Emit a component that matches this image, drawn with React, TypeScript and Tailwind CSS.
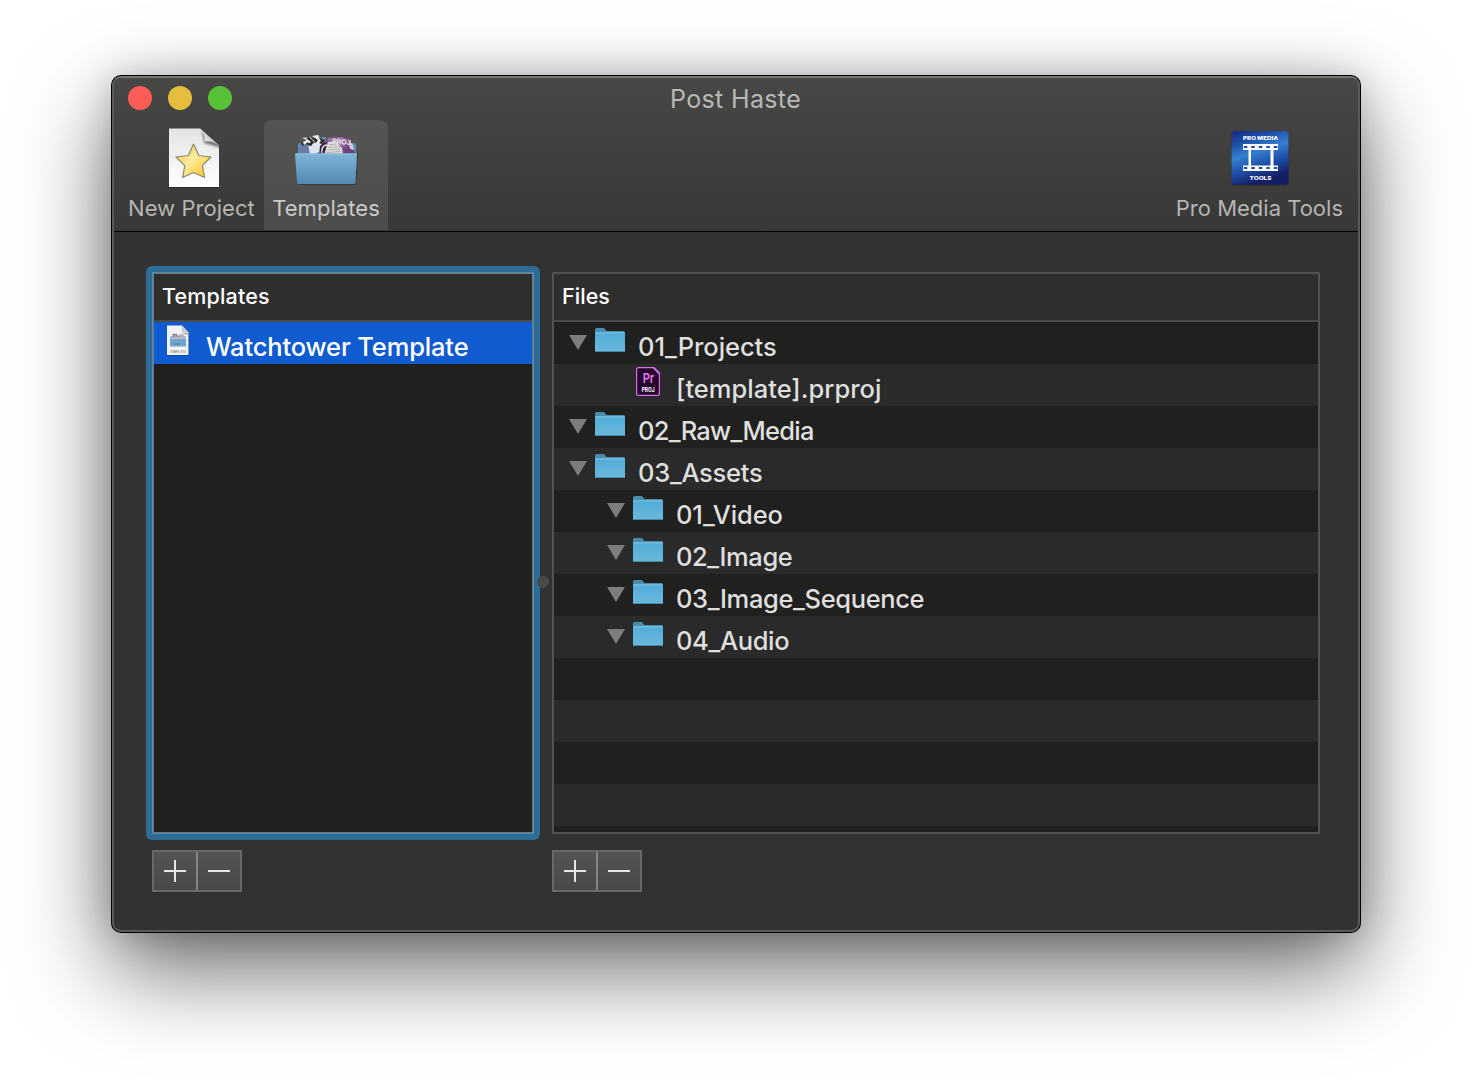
import React from "react";

function DocumentStarIcon() {
  return (
    <svg width="54" height="62" viewBox="0 0 54 62">
      <defs>
        <linearGradient id="paper" x1="0" y1="0" x2="0" y2="1">
          <stop offset="0" stopColor="#e4e4e4" />
          <stop offset="1" stopColor="#ffffff" />
        </linearGradient>
        <linearGradient id="gold" x1="0" y1="0" x2="1" y2="1">
          <stop offset="0" stopColor="#fbc926" />
          <stop offset="0.45" stopColor="#fbeaa0" />
          <stop offset="1" stopColor="#fbc40f" />
        </linearGradient>
        <linearGradient id="fold" x1="0" y1="1" x2="1" y2="0">
          <stop offset="0" stopColor="#ffffff" />
          <stop offset="0.5" stopColor="#cfcfcf" />
        </linearGradient>
        <filter id="soft" x="-40%" y="-40%" width="180%" height="180%">
          <feGaussianBlur stdDeviation="1.3" />
        </filter>
        <clipPath id="sheet"><path d="M2 1.500H33L52 18.500V60H2Z" /></clipPath>
      </defs>
      <path d="M2 2H33L52 19V61H2Z" fill="#202020" opacity="0.5" />
      <path d="M2 1.500H33L52 18.500V60H2Z" fill="url(#paper)" />
      <g clipPath="url(#sheet)">
        <path d="M35 4L37 16L54 21V17Z" fill="#555" opacity="0.75" filter="url(#soft)" />
      </g>
      <path d="M33 1.500C36.500 5 38 9 37.500 14.500C43 13.500 48 15 52 18.500Z" fill="url(#fold)" />
      <path d="M26.500 17L31.800 28.500L44 30L35.400 38.600L37.600 50.500L26.500 45.500L15.600 50.500L17.800 38.600L9 30L21.300 28.500Z" fill="url(#gold)" stroke="#8a8678" strokeWidth="1.200" strokeLinejoin="round" />
    </svg>
  );
}

function TemplatesIcon() {
  return (
    <svg width="66" height="54" viewBox="0 0 66 54">
      <defs>
        <linearGradient id="boxFront" x1="0" y1="0" x2="0" y2="1">
          <stop offset="0" stopColor="#7db4d7" />
          <stop offset="1" stopColor="#5488b0" />
        </linearGradient>
        <filter id="boxShade" x="-10%" y="-10%" width="120%" height="130%">
          <feDropShadow dx="0.8" dy="0.6" stdDeviation="0.6" floodColor="#1b2530" floodOpacity="0.9" />
        </filter>
      </defs>
      <path d="M4 23V12Q4 10 6 10H12L14 8L28 4H32V10H60Q62 10 62 12V23Z" fill="#5791b7" />
      <path d="M7 10L26 3L31 8L33 22H12Z" fill="#30323c" />
      <path d="M12 12L29 8L30 22H14Z" fill="#dfe4ed" />
      <path d="M5 14L14 11L16 22H7Z" fill="#697ba9" />
      <path d="M8 5L16 4L21 9L16 12L14 9L10 12L9 9L13 7Z" fill="#f1f1ef" />
      <path d="M18 3L24 2L29 7L25 11L22 10L24 7Z" fill="#f1f1ef" />
      <path d="M15 4L20 9L17 13L13 12L17 9L12 5ZM24 3L30 8L28 11L25 10L27 8Z" fill="#252525" />
      <path d="M28 9L42 4L55 5L62 22H28Z" fill="#7e518b" />
      <path d="M33 5L49 4L51 13L36 13Z" fill="#9971a4" />
      <text x="38" y="10.500" className="font-[Inter] text-[7px] font-bold" fill="#f0e8f2" transform="rotate(5 38 10)">PROJ</text>
      <path d="M26 13L30 9L34 11L33 22H25Z" fill="#382342" />
      <path d="M28 21C27 16 29 12 33 12" stroke="#e9ddeb" strokeWidth="1.500" fill="none" />
      <path d="M34 9L42 8.500L48 15L49 22H30Z" fill="#dedddb" />
      <path d="M35 12L42 11M34 14.500L46 13.500M33 17L47 16M32 19.500L47 18.500" stroke="#aaa9a8" strokeWidth="0.900" />
      <path d="M21 21Q24 18 29 21V23H21Z" fill="#26499b" />
      <path d="M51 16L59 12L61 22H48Z" fill="#6b437a" />
      <path d="M54 6L59 12L60 17L56 16Z" fill="#d5c8da" />
      <path d="M1 20.500H63L61.500 49.500Q61.500 51 60 51H5Q3 51 3 49.500Z" fill="url(#boxFront)" filter="url(#boxShade)" />
      <path d="M1.500 21H62.500" stroke="#93c3df" strokeWidth="1" />
    </svg>
  );
}

function MediaToolsIcon() {
  const holes = [0, 1, 2, 3, 4];
  return (
    <svg width="58" height="56" viewBox="0 0 58 56">
      <defs>
        <linearGradient id="brand" x1="0" y1="0" x2="0.35" y2="1">
          <stop offset="0" stopColor="#16297d" />
          <stop offset="0.25" stopColor="#1f50a8" />
          <stop offset="0.48" stopColor="#357fd2" />
          <stop offset="0.75" stopColor="#1d4ca5" />
          <stop offset="1" stopColor="#151d63" />
        </linearGradient>
      </defs>
      <rect x="0.500" y="2" width="57" height="53.500" rx="3.500" fill="#222b39" />
      <rect x="0.500" y="1" width="57" height="53.500" rx="3.500" fill="url(#brand)" />
      <text x="29.500" y="10" textAnchor="middle" textLength="35" lengthAdjust="spacingAndGlyphs" className="font-[Inter] text-[5.2px] font-extrabold" fill="#fff">PRO MEDIA</text>
      <path d="M12 14H47V20H42.500V35.500H47V41H12V35.500H17.500V20H12ZM20 20V35.500H39.500V20Z" fill="#fff" fillRule="evenodd" />
      {holes.map((i) => (
        <g key={i} fill="#1d4ba0">
          <rect x={12.800 + i * 7.500} y="16" width="3.500" height="2" />
          <rect x={12.800 + i * 7.500} y="37" width="3.500" height="2" />
        </g>
      ))}
      <text x="29.500" y="50" textAnchor="middle" textLength="22" lengthAdjust="spacingAndGlyphs" className="font-[Inter] text-[5.200px] font-extrabold" fill="#fff">TOOLS</text>
    </svg>
  );
}

function TemplateFileIcon() {
  return (
    <svg width="24" height="31" viewBox="0 0 24 31" className="block">
      <path d="M1 1H16L23 8V30.500H1Z" fill="#153878" />
      <path d="M1 0.500H16L22.500 7.500V30H1Z" fill="#f2f2f2" />
      <path d="M16 0.500V7.500H22.500Z" fill="#c9c9c9" />
      <path d="M15.500 8H22.500V10Z" fill="#9ca3aa" />
      <path d="M4 13L5 11H19L20 13Z" fill="#74a3c4" />
      <path d="M6 12L7 9L11 9L12 11L14 9L18 10L19 13H5Z" fill="#b8adba" />
      <path d="M6 10L9 9L8 12M10 9L12 12" stroke="#777b86" fill="none" />
      <rect x="4" y="13.500" width="16" height="8" fill="#72a5cb" />
      <path d="M8 19H14" stroke="#4a7da7" />
      <text x="12" y="27.500" textAnchor="middle" textLength="16" lengthAdjust="spacingAndGlyphs" className="font-[Inter] text-[3px] font-medium" fill="#777">TEMPLATE</text>
    </svg>
  );
}

function FolderIcon() {
  return (
    <svg width="30" height="25" viewBox="0 0 30 25" className="block">
      <defs>
        <linearGradient id="folderFace" x1="0" y1="0" x2="0" y2="1">
          <stop offset="0" stopColor="#51acd8" />
          <stop offset="1" stopColor="#6bb8da" />
        </linearGradient>
      </defs>
      <path d="M0 22V1.500Q0 0 1.500 0H8.500Q9.500 0 10.300 1.500Q11 3 12.500 3H28.500Q30 3 30 4.500V22Z" fill="#4b8bac" />
      <rect y="4.200" width="30" height="19.800" rx="1" fill="url(#folderFace)" />
      <path d="M0.500 4.900H29.500" stroke="#86c9e6" strokeWidth="0.900" />
      <path d="M0.500 23.500H29.500" stroke="#438bac" strokeWidth="1" />
    </svg>
  );
}

function PremiereIcon() {
  return (
    <svg width="24" height="29" viewBox="0 0 24 29" className="block">
      <path d="M2.500 0.600H17.500L23.400 6.500V26.500Q23.400 28.400 21.500 28.400H2.500Q0.600 28.400 0.600 26.500V2.500Q0.600 0.600 2.500 0.600Z" fill="#27062d" stroke="#d86ee9" strokeWidth="1.200" />
      <path d="M17.500 0.600L23.400 6.500" stroke="#d86ee9" strokeWidth="1.800" />
      <text x="12.500" y="15.500" textAnchor="middle" textLength="11.500" lengthAdjust="spacingAndGlyphs" className="font-[Inter] text-[13px] font-semibold" fill="#e67bf5">Pr</text>
      <text x="12.200" y="25" textAnchor="middle" textLength="13" lengthAdjust="spacingAndGlyphs" className="font-[Inter] text-[6.5px] font-bold" fill="#fff">PROJ</text>
    </svg>
  );
}

function AddRemove() {
  return (
    <div className="flex h-[42px] w-[90px] border-2 border-[#686867] bg-linear-to-b from-[#535351] to-[#494948]">
      <button aria-label="Add" className="flex w-[44px] items-center justify-center border-r-2 border-[#868685]">
        <svg width="22" height="22" className="block"><path d="M0 11H22M11 0V22" stroke="#e8e8e5" strokeWidth="2" /></svg>
      </button>
      <button aria-label="Remove" className="flex w-[42px] items-center justify-center">
        <svg width="22" height="22" className="block"><path d="M0 11H22" stroke="#e8e8e5" strokeWidth="2" /></svg>
      </button>
    </div>
  );
}

const files = [
  { name: "01_Projects", level: 0, track: "tracking-[-0.06px]" },
  { name: "[template].prproj", level: 1, file: true, track: "tracking-[0.01px]" },
  { name: "02_Raw_Media", level: 0, track: "tracking-[-0.73px]" },
  { name: "03_Assets", level: 0, track: "tracking-[-0.28px]" },
  { name: "01_Video", level: 1, track: "tracking-[-0.1px]" },
  { name: "02_Image", level: 1, track: "tracking-[-0.42px]" },
  { name: "03_Image_Sequence", level: 1, track: "tracking-[-0.36px]" },
  { name: "04_Audio", level: 1, track: "tracking-[-0.35px]" },
  null, null, null, null,
];

function FileRow({ file }: { file: (typeof files)[number] }) {
  return (
    <div className="flex h-[42px] shrink-0 items-start odd:bg-[#20201e] even:bg-[#2a2a2b]">
      {file && (
        <div className={file.level ? "flex pl-[53px]" : "flex pl-[15px]"}>
          <svg width="18" height="15" className={file.file ? "invisible mt-[13px]" : "mt-[13px]"}><path d="M0 0H18L9 15Z" fill="#7d7d7d" /></svg>
          <div className={file.file ? "ml-[11px] mt-[3px] w-[33px]" : "ml-2 mt-[6px] w-[36px]"}>
            {file.file ? <PremiereIcon /> : <FolderIcon />}
          </div>
          <span className={`mt-[5px] ml-[7px] whitespace-nowrap text-[25.500px] leading-[40px] font-[450] text-[#dfdfde] ${file.track}`}>{file.name}</span>
        </div>
      )}
    </div>
  );
}

export default function App() {
  return (
    <main className="flex h-[1080px] w-[1472px] items-start overflow-hidden bg-white pt-[75px] pl-[111px] font-[Inter,sans-serif]">
      <div className="h-[858px] w-[1250px] rounded-[10px] bg-black p-px shadow-[0_36px_92px_rgba(0,0,0,0.6),0_0_36px_rgba(0,0,0,0.18)]">
        <div className="flex h-[856px] w-[1248px] flex-col overflow-hidden rounded-[9px] border-2 border-[#5a5a58] border-t-[#777774] bg-[#323230]">
          <header className="flex h-[154px] w-[1244px] shrink-0 flex-col border-b border-black bg-linear-to-b from-[#474745] to-[#383836]">
            <div className="flex h-[42px] items-start pt-2">
              <div className="flex w-[556px] gap-4 pl-[14px]">
                <span className="size-6 rounded-full bg-[#ff5c57]" />
                <span className="size-6 rounded-full bg-[#e6bd3d]" />
                <span className="size-6 rounded-full bg-[#59c137]" />
              </div>
              <h1 className="whitespace-nowrap text-[25px] leading-[27px] tracking-[0.35px] text-[#b8b8b7]">Post Haste</h1>
            </div>
            <nav className="flex h-[111px] text-[22px] leading-[26px] text-[#b5b5b4]">
              <button className="flex w-[150px] flex-col items-start pl-[14px]">
                <span className="ml-[39px] mt-[7px] h-[62px] w-[54px]"><DocumentStarIcon /></span>
                <span className="mt-[6px] whitespace-nowrap tracking-[0.05px]">New Project</span>
              </button>
              <button className="flex h-[110px] w-[124px] flex-col items-center rounded-t-[8px] bg-linear-to-b from-[#545452] to-[#4c4c4a] text-[#cacac9]">
                <span className="mt-[13px] ml-[2px] h-[54px] w-[66px]"><TemplatesIcon /></span>
                <span className="mt-[8px] whitespace-nowrap tracking-[0.05px]">Templates</span>
              </button>
              <button className="ml-auto mr-[15px] flex flex-col items-center">
                <span className="mt-[10px] ml-[2px] h-[56px] w-[58px]"><MediaToolsIcon /></span>
                <span className="mt-[9px] whitespace-nowrap">Pro Media Tools</span>
              </button>
            </nav>
          </header>

          <section className="flex pt-[34px] pl-8">
            <div className="w-[394px]">
              <div className="h-[574px] rounded-[6px] bg-[#2c6c97] p-[6px]">
                <div className="h-[562px] border border-[#4d8bb2]">
                  <div className="flex h-[560px] flex-col border border-[#777] bg-[#20201e]">
                    <div className="h-[48px] shrink-0 border-b-2 border-[#4a4a49] bg-[#2e2e2d] pl-2 text-[21.500px] leading-[44px] font-medium tracking-[0.15px] text-white">Templates</div>
                    <div className="flex h-[42px] items-start bg-[#105bd0] pt-[3px] pl-3">
                      <TemplateFileIcon />
                      <span className="ml-4 mt-[2px] whitespace-nowrap text-[25.500px] leading-[40px] font-[450] tracking-[-0.15px] text-white">Watchtower Template</span>
                    </div>
                  </div>
                </div>
              </div>
              <div className="mt-[10px] ml-[6px]"><AddRemove /></div>
            </div>
            <div className="mt-[310px] -ml-[3px] mr-[3px] size-3 rounded-full bg-[#4a4a49]" />
            <div className="mt-[6px] w-[768px]">
              <div className="flex h-[562px] flex-col overflow-hidden border-2 border-[#525251] bg-[#20201e]">
                <div className="h-[48px] shrink-0 border-b-2 border-[#4a4a49] bg-[#2e2e2d] pl-2 text-[21.500px] leading-[44px] font-medium tracking-[0.05px] text-white">Files</div>
                <div className="flex flex-col">
                  {files.map((file, i) => <FileRow key={i} file={file} />)}
                </div>
              </div>
              <div className="mt-4"><AddRemove /></div>
            </div>
          </section>
        </div>
      </div>
    </main>
  );
}
